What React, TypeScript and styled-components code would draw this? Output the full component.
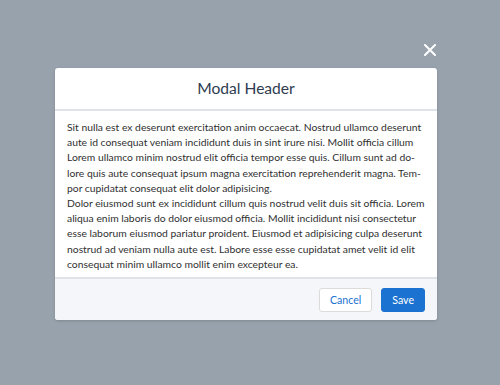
import * as React from "react";
import styled, { createGlobalStyle } from "styled-components";

const GlobalStyle = createGlobalStyle`
  html, body {
    margin: 0;
    padding: 0;
  }
  body {
    font-family: Lato, "Liberation Sans", sans-serif;
    background: #98a2ac;
  }
`;

const Backdrop = styled.div`
  width: 500px;
  height: 385px;
  background: #98a2ac;
  padding: 44px 0 0 55px;
  box-sizing: border-box;
`;

const Container = styled.div`
  width: 382px;
  display: flex;
  flex-direction: column;
`;

const CloseRow = styled.div`
  display: flex;
  justify-content: flex-end;
  padding-right: 1px;
  height: 12px;
  margin-bottom: 12px;
`;

const CloseButton = styled.button`
  width: 12px;
  height: 12px;
  padding: 0;
  border: 0;
  background: none;
  cursor: pointer;
  display: flex;
`;

const Modal = styled.section`
  background: #fff;
  border-radius: 3px;
  overflow: hidden;
  box-shadow: 0 1px 3px rgba(0, 0, 0, 0.16);
`;

const Header = styled.header`
  height: 41px;
  display: flex;
  align-items: center;
  justify-content: center;
  border-bottom: 2px solid #dfe3e9;
`;

const Title = styled.h2`
  margin: 0;
  font-size: 15.6px;
  font-weight: 400;
  color: #2e3b50;
  line-height: 1;
`;

const Body = styled.div`
  padding: 9px 12px 5px;
  font-size: 10.35px;
  line-height: 15.2px;
  color: #303030;
`;

const Para = styled.p`
  margin: 0;
`;

const Footer = styled.footer`
  height: 43px;
  box-sizing: border-box;
  background: #f4f6f9;
  border-top: 2px solid #dfe3e9;
  display: flex;
  align-items: center;
  justify-content: flex-end;
  gap: 9px;
  padding: 0 12px;
`;

const Button = styled.button<{ $brand?: boolean }>`
  height: 24px;
  padding: 0 10px;
  border-radius: 3px;
  font-family: inherit;
  font-size: 10.6px;
  cursor: pointer;
  border: 1px solid ${(p) => (p.$brand ? "#1b72d0" : "#dddbda")};
  background: ${(p) => (p.$brand ? "#1b72d0" : "#fff")};
  color: ${(p) => (p.$brand ? "#fff" : "#1b72d0")};
`;

export default function App() {
  return (
    <>
      <GlobalStyle />
      <Backdrop>
        <Container>
          <CloseRow>
            <CloseButton aria-label="Close">
              <svg width="12" height="12" viewBox="0 0 12 12">
                <path d="M1 1 L11 11 M11 1 L1 11" stroke="#fff" strokeWidth="2" strokeLinecap="round" />
              </svg>
            </CloseButton>
          </CloseRow>
          <Modal>
            <Header>
              <Title>Modal Header</Title>
            </Header>
            <Body>
              <Para>
                Sit nulla est ex deserunt exercitation anim occaecat. Nostrud ullamco deserunt aute id consequat veniam
                incididunt duis in sint irure nisi. Mollit officia cillum Lorem ullamco minim nostrud elit officia tempor
                esse quis. Cillum sunt ad do&shy;lore quis aute consequat ipsum magna exercitation reprehenderit magna.
                Tem&shy;por cupidatat consequat elit dolor adipisicing.
              </Para>
              <Para>
                Dolor eiusmod sunt ex incididunt cillum quis nostrud velit duis sit officia. Lorem aliqua enim laboris do
                dolor eiusmod officia. Mollit incididunt nisi consectetur esse laborum eiusmod pariatur proident. Eiusmod
                et adipisicing culpa deserunt nostrud ad veniam nulla aute est. Labore esse esse cupidatat amet velit id
                elit consequat minim ullamco mollit enim excepteur ea.
              </Para>
            </Body>
            <Footer>
              <Button>Cancel</Button>
              <Button $brand>Save</Button>
            </Footer>
          </Modal>
        </Container>
      </Backdrop>
    </>
  );
}
